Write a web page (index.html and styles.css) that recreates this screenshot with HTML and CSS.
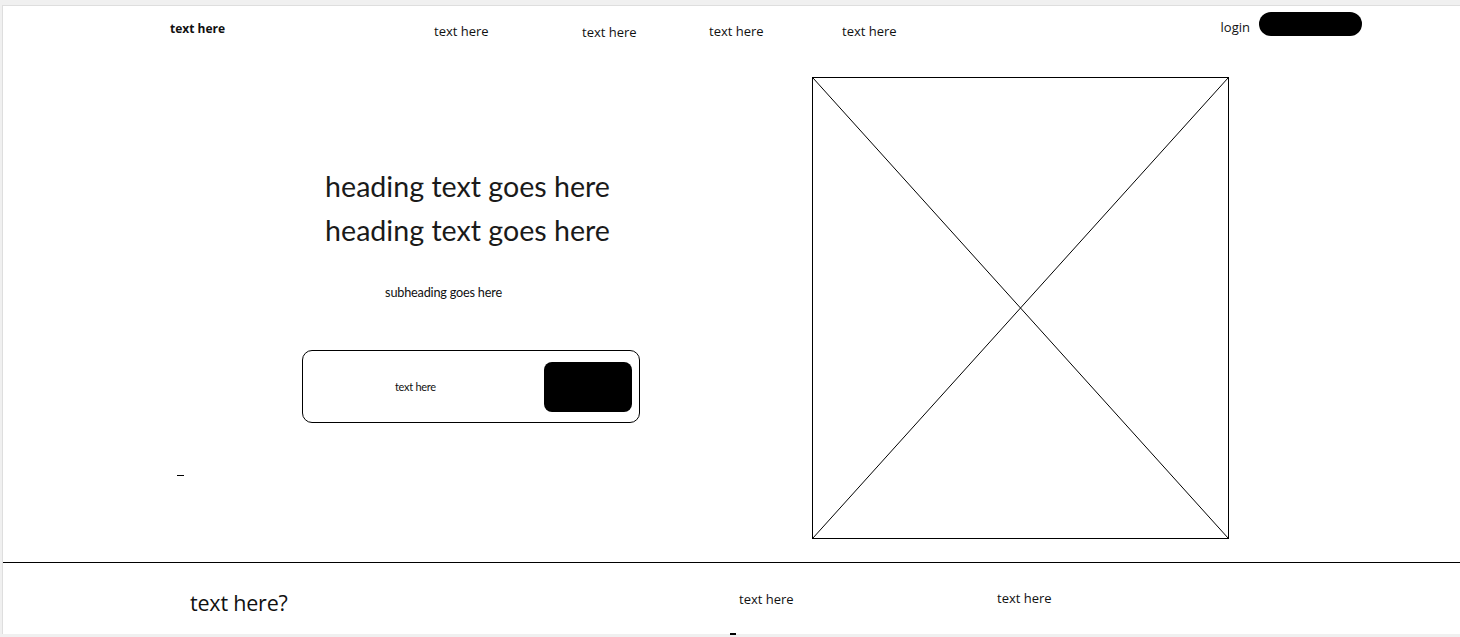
FILE: index.html
```html
<!DOCTYPE html>
<html lang="en">
<head>
<meta charset="utf-8">
<title>Wireframe</title>
<link rel="stylesheet" href="styles.css">
</head>
<body>
<div class="page">
  <header class="nav">
    <span class="brand">text here</span>
    <span class="nav-link l1">text here</span>
    <span class="nav-link l2">text here</span>
    <span class="nav-link l3">text here</span>
    <span class="nav-link l4">text here</span>
    <span class="login">login</span>
    <span class="pill"></span>
  </header>
  <main class="hero">
    <section class="hero-left">
      <h1 class="heading">heading text goes here<br>heading text goes here</h1>
      <p class="subheading">subheading goes here</p>
      <div class="field">
        <span class="field-text">text here</span>
        <span class="field-btn"></span>
      </div>
      <span class="dash"></span>
    </section>
    <div class="placeholder">
      <svg viewBox="0 0 100 100" preserveAspectRatio="none" class="x-lines">
        <line x1="0" y1="0" x2="100" y2="100" vector-effect="non-scaling-stroke"/>
        <line x1="100" y1="0" x2="0" y2="100" vector-effect="non-scaling-stroke"/>
      </svg>
    </div>
  </main>
  <footer class="footer">
    <span class="foot-title">text here?</span>
    <span class="foot-link f1">text here</span>
    <span class="foot-link f2">text here</span>
    <span class="foot-dash"></span>
  </footer>
</div>
</body>
</html>
```
FILE: styles.css
```css
html, body {
  margin: 0;
  padding: 0;
  background: #f0f0f0;
  height: 100%;
  overflow: hidden;
}
.page {
  position: relative;
  margin: 5px 0 0 2px;
  height: 628px;
  background: #ffffff;
  border-top: 1px solid #dedede;
  border-left: 1px solid #dedede;
  color: #111;
  font-family: "Open Sans", "Liberation Sans", sans-serif;
}
.nav {
  display: flex;
  align-items: flex-start;
  height: 50px;
  padding-left: 167px;
  padding-right: 98px;
  font-size: 13px;
  line-height: 18px;
}
.brand {
  width: 264px;
  margin-top: 14px;
  font-weight: 700;
  font-size: 12px;
}
.nav-link { margin-top: 16px; }
.l1 { width: 148px; }
.l2 { width: 127px; margin-top: 17px; }
.l3 { width: 133px; }
.login {
  margin-left: auto;
  margin-top: 12px;
  margin-right: 9px;
}
.pill {
  margin-top: 6px;
  width: 103px;
  height: 24px;
  background: #000;
  border-radius: 12px;
}
.hero {
  display: flex;
  align-items: flex-start;
  height: 506px;
  box-sizing: border-box;
  padding-top: 21px;
  padding-left: 167px;
}
.hero-left {
  width: 595px;
  display: flex;
  flex-direction: column;
  align-items: flex-start;
}
.heading {
  align-self: stretch;
  margin: 87px 0 0;
  text-align: center;
  font-family: "Lato", "Open Sans", sans-serif;
  font-weight: 400;
  font-size: 28.6px;
  line-height: 44px;
  color: #1a1a1a;
}
.subheading {
  align-self: stretch;
  margin: 32px 48px 0 0;
  text-align: center;
  font-family: "Lato", sans-serif;
  font-size: 12.7px;
  line-height: 16px;
  letter-spacing: -0.2px;
}
.field {
  display: flex;
  align-items: center;
  margin: 50px 0 0 132px;
  width: 338px;
  height: 73px;
  box-sizing: border-box;
  border: 1px solid #000;
  border-radius: 10px;
}
.field-text {
  margin-left: 92px;
  font-family: "Lato", sans-serif;
  font-size: 11px;
  letter-spacing: -0.3px;
}
.field-btn {
  margin-left: auto;
  margin-right: 7px;
  width: 88px;
  height: 50px;
  background: #000;
  border-radius: 8px;
}
.dash {
  margin: 52px 0 0 7px;
  width: 7px;
  height: 1px;
  background: #000;
}
.placeholder {
  margin-left: 47px;
  width: 417px;
  height: 462px;
  box-sizing: border-box;
  border: 1px solid #000;
}
.x-lines {
  display: block;
  width: 100%;
  height: 100%;
  stroke: #000;
  stroke-width: 1;
}
.footer {
  display: flex;
  align-items: flex-start;
  height: 71px;
  box-sizing: border-box;
  border-top: 1px solid #000;
  padding-left: 187px;
}
.foot-title {
  width: 549px;
  margin-top: 27px;
  font-size: 21.5px;
  line-height: 26px;
  letter-spacing: -0.2px;
}
.foot-link {
  font-size: 13px;
  line-height: 18px;
}
.f1 { width: 258px; margin-top: 27px; }
.f2 { margin-top: 26px; }
.foot-dash {
  position: absolute;
  left: 727px;
  bottom: -1px;
  width: 6px;
  height: 2px;
  background: #000;
}
```
